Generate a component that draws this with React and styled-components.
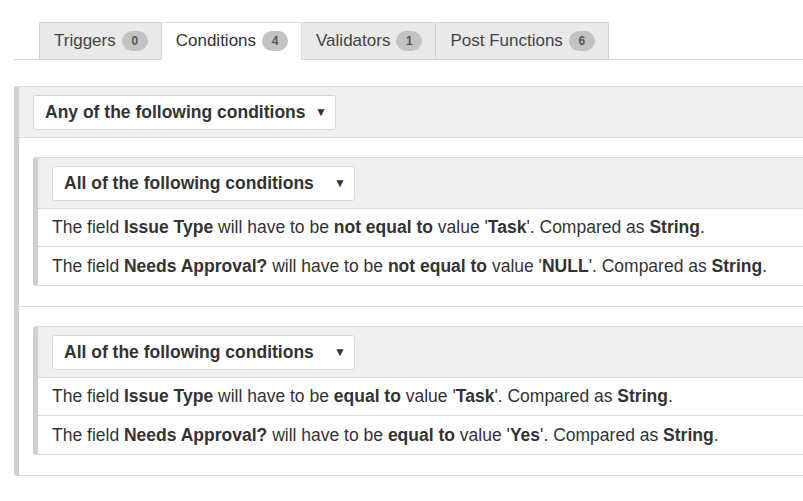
import React from "react";
import styled, { createGlobalStyle } from "styled-components";

const GlobalStyle = createGlobalStyle`
	html, body {
		margin: 0;
		padding: 0;
		background: #fff;
		overflow: hidden;
	}
	body {
		font-family: "Liberation Sans", Arial, sans-serif;
		color: #333;
	}
`;

const Page = styled.div`
	width: 830px;
	padding: 22px 0 0 14px;
`;

const TabBar = styled.div`
	display: flex;
	padding-left: 25px;
	border-bottom: 1px solid #d4d4d4;
`;

const Tab = styled.div`
	display: flex;
	align-items: center;
	gap: 6px;
	height: 36px;
	padding: 0 13px 0 14px;
	margin-bottom: -1px;
	font-size: 17px;
	color: ${(props) => (props.active ? "#333" : "#444")};
	background: ${(props) => (props.active ? "#fff" : "#e9e9e9")};
	border: 1px solid ${(props) => (props.active ? "#ddd" : "#d2d2d2")};
	border-bottom-color: ${(props) => (props.active ? "#fff" : "#d4d4d4")};
	border-left-width: ${(props) => (props.first ? "1px" : "0")};
	border-radius: 2px 2px 0 0;
`;

const Badge = styled.span`
	display: inline-flex;
	align-items: center;
	justify-content: center;
	min-width: 26px;
	height: 20px;
	border-radius: 10px;
	background: #c2c2c2;
	color: #555;
	font-size: 12px;
	font-weight: bold;
`;

const Panel = styled.div`
	border: 1px solid #dadada;
	border-left: 5px solid #cfcfcf;
	border-right: none;
	border-radius: 3px 0 0 3px;
	background: #fff;
`;

const OuterPanel = styled(Panel)`
	margin-top: 26px;
`;

const PanelHeader = styled.div`
	display: flex;
	align-items: center;
	height: 50px;
	padding-left: 14px;
	background: #efefef;
	border-bottom: 1px solid #dadada;
`;

const Select = styled.div`
	display: flex;
	align-items: center;
	justify-content: space-between;
	height: 35px;
	width: ${(props) => props.width}px;
	box-sizing: border-box;
	padding: 0 8px 0 11px;
	background: #fff;
	border: 1px solid #d8d8d8;
	border-radius: 3px;
	font-size: 17.5px;
	font-weight: bold;
	color: #333;
`;

const Caret = styled.span`
	font-size: 12px;
	color: #333;
`;

const Group = styled.div`
	padding: 19px 0 20px 14px;
	border-bottom: ${(props) => (props.last ? "none" : "1px solid #dadada")};
`;

const Row = styled.div`
	height: ${(props) => (props.last ? "38px" : "37px")};
	display: flex;
	align-items: center;
	padding-left: 14px;
	font-size: 17.5px;
	color: #333;
	white-space: nowrap;
	border-bottom: ${(props) => (props.last ? "none" : "1px solid #dadada")};

	b {
		color: #333;
	}
`;

const tabs = [
	{ label: "Triggers", count: 0 },
	{ label: "Conditions", count: 4, active: true },
	{ label: "Validators", count: 1 },
	{ label: "Post Functions", count: 6 },
];

const groups = [
	{ op: "not equal to", approval: "NULL" },
	{ op: "equal to", approval: "Yes" },
];

const App = () => {
	return (
		<Page>
			<GlobalStyle />
			<TabBar>
				{tabs.map((t, i) => (
					<Tab key={t.label} active={t.active} first={i === 0}>
						{t.label}
						<Badge>{t.count}</Badge>
					</Tab>
				))}
			</TabBar>
			<OuterPanel>
				<PanelHeader>
					<Select width={303}>
						Any of the following conditions
						<Caret>▼</Caret>
					</Select>
				</PanelHeader>
				{groups.map((g, i) => (
					<Group key={i} last={i === groups.length - 1}>
						<Panel>
							<PanelHeader>
								<Select width={303}>
									All of the following conditions
									<Caret>▼</Caret>
								</Select>
							</PanelHeader>
							<Row>
								<span>
									The field <b>Issue Type</b> will have to be <b>{g.op}</b> value
									'<b>Task</b>'. Compared as <b>String</b>.
								</span>
							</Row>
							<Row last>
								<span>
									The field <b>Needs Approval?</b> will have to be <b>{g.op}</b>{" "}
									value '<b>{g.approval}</b>'. Compared as <b>String</b>.
								</span>
							</Row>
						</Panel>
					</Group>
				))}
			</OuterPanel>
		</Page>
	);
};

export default App;
